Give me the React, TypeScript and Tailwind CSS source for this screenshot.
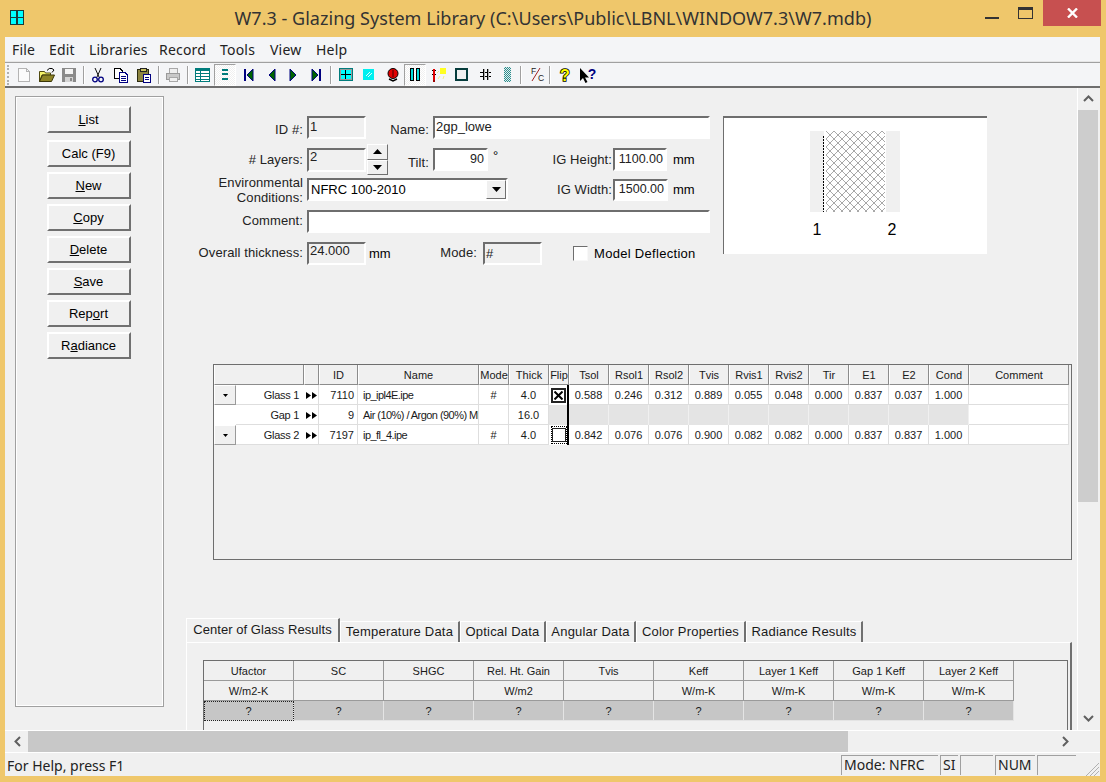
import React from "react";

const ui = "font-['Liberation_Sans',Arial,sans-serif]";
const seg = "font-['Noto_Sans',sans-serif]";

function Sv({ children, w = 16, h = 16 }: { children: React.ReactNode; w?: number; h?: number }) {
  return (
    <svg width={w} height={h} viewBox={`0 0 ${w} ${h}`} shapeRendering="crispEdges" className="block">
      {children}
    </svg>
  );
}

const Sep = ({ w }: { w: number }) => (
  <div style={{ width: w }} className="flex shrink-0 justify-center">
    <div className="h-[18px] w-[2px] border-r border-l border-r-white border-l-[#a0a0a0]" />
  </div>
);

function Tb({ w, pressed, children }: { w: number; pressed?: boolean; children: React.ReactNode }) {
  return (
    <div
      style={{ width: w }}
      className={
        "flex h-[22px] shrink-0 items-center justify-center " +
        (pressed
          ? "border border-t-[#a0a0a0] border-r-white border-b-white border-l-[#a0a0a0] bg-[repeating-conic-gradient(#ffffff_0_25%,#f0f0f0_0_50%)] bg-[length:2px_2px]"
          : "")
      }
    >
      {children}
    </div>
  );
}

const NavIcon = ({ dir, bar }: { dir: "l" | "r"; bar?: boolean }) => (
  <Sv w={12} h={14}>
    {dir === "l" ? (
      <>
        {bar && <rect x="1" y="1" width="2" height="12" fill="#000080" />}
        <polygon points="10,1 10,13 4,7" fill="#006400" stroke="#000080" shapeRendering="auto" />
      </>
    ) : (
      <>
        <polygon points="2,1 2,13 8,7" fill="#006400" stroke="#000080" shapeRendering="auto" />
        {bar && <rect x="9" y="1" width="2" height="12" fill="#000080" />}
      </>
    )}
  </Sv>
);

function Toolbar() {
  return (
    <div className="flex h-[23px] shrink-0 items-center bg-[#f4f5f7] pl-[2px]">
      <div className="mr-[4px] h-[20px] w-[2px] border-l-2 border-dotted border-[#b0b0b0]" />
      <Tb w={22}>
        <Sv>
          <path d="M2.5 1.5H10.5L13.5 4.5V14.5H2.5Z M10.5 1.5V4.5H13.5" fill="#fbfbfb" stroke="#b4b4b4" />
        </Sv>
      </Tb>
      <Tb w={23}>
        <Sv>
          <path d="M0.5 14.5V4.5H5.5L6.5 6H11.5V8H3L0.5 14.5Z" fill="#f5f26a" stroke="#504a10" shapeRendering="auto" />
          <path d="M0.5 14.5L3.5 8H15.5L12.5 14.5Z" fill="#8e8426" stroke="#3a3608" shapeRendering="auto" />
          <path d="M8 3.5Q10 0.5 13 1.5L15 3L13 5.5" fill="none" stroke="#000" shapeRendering="auto" />
        </Sv>
      </Tb>
      <Tb w={22}>
        <Sv>
          <rect x="1" y="1" width="14" height="14" fill="#8a8a8a" />
          <rect x="4" y="2" width="8" height="5" fill="#f4f4f4" />
          <rect x="4" y="10" width="8" height="5" fill="#d4d4d4" />
          <rect x="9" y="11" width="2" height="3" fill="#8a8a8a" />
        </Sv>
      </Tb>
      <Sep w={7} />
      <Tb w={22}>
        <Sv>
          <path d="M5 1L9 10M11 1L7 10" stroke="#111" fill="none" shapeRendering="auto" />
          <circle cx="5" cy="12.5" r="2.3" fill="none" stroke="#000080" strokeWidth="1.3" shapeRendering="auto" />
          <circle cx="11" cy="12.5" r="2.3" fill="none" stroke="#000080" strokeWidth="1.3" shapeRendering="auto" />
        </Sv>
      </Tb>
      <Tb w={24}>
        <Sv>
          <path d="M1.5 1.5H7L9.5 4V11.5H1.5Z" fill="#fff" stroke="#000" />
          <path d="M6.5 5.5H12L14.5 8V15H6.5Z" fill="#fff" stroke="#000080" />
          <rect x="8" y="9" width="5" height="1" fill="#000080" />
          <rect x="8" y="11" width="5" height="1" fill="#000080" />
          <rect x="8" y="13" width="5" height="1" fill="#000080" />
        </Sv>
      </Tb>
      <Tb w={22}>
        <Sv>
          <rect x="1.5" y="2.5" width="11" height="12" fill="#8c8440" stroke="#2a2a10" />
          <rect x="4" y="1" width="6" height="3" fill="#c8c060" stroke="#222" />
          <rect x="7.5" y="7.5" width="7" height="8" fill="#fff" stroke="#000080" />
          <rect x="9" y="10" width="4" height="1" fill="#000080" />
          <rect x="9" y="12" width="4" height="1" fill="#000080" />
        </Sv>
      </Tb>
      <Sep w={7} />
      <Tb w={22}>
        <Sv>
          <path d="M4 1.5H12V6H4Z" fill="#efefef" stroke="#a8a8a8" />
          <path d="M1.5 6.5H14.5V12.5H1.5Z" fill="#c8c8c8" stroke="#9a9a9a" />
          <path d="M4 10.5H12V14.5H4Z" fill="#f0f0f0" stroke="#a8a8a8" />
        </Sv>
      </Tb>
      <Sep w={7} />
      <Tb w={23}>
        <Sv w={15} h={14}>
          <rect x="0.5" y="0.5" width="14" height="13" fill="#fff" stroke="#007c7c" />
          <rect x="1" y="1" width="13" height="2" fill="#007c7c" />
          <rect x="5" y="1" width="1" height="12" fill="#007c7c" />
          <rect x="1" y="5" width="13" height="1" fill="#007c7c" />
          <rect x="1" y="8" width="13" height="1" fill="#007c7c" />
          <rect x="1" y="11" width="13" height="1" fill="#007c7c" />
        </Sv>
      </Tb>
      <Tb w={22} pressed>
        <Sv w={8} h={13}>
          <rect x="1" y="1" width="6" height="2" fill="#007c7c" />
          <rect x="1" y="5" width="6" height="2" fill="#007c7c" />
          <rect x="1" y="10" width="6" height="2" fill="#007c7c" />
        </Sv>
      </Tb>
      <Tb w={25}><NavIcon dir="l" bar /></Tb>
      <Tb w={20}><NavIcon dir="l" /></Tb>
      <Tb w={26}><NavIcon dir="r" /></Tb>
      <Tb w={18}><NavIcon dir="r" bar /></Tb>
      <Sep w={12} />
      <Tb w={18}>
        <Sv w={14} h={13}>
          <rect x="0" y="0" width="14" height="13" fill="#007c7c" />
          <rect x="1" y="1" width="12" height="11" fill="#9a9a9a" />
          <rect x="2" y="2" width="10" height="9" fill="#00ffff" />
          <rect x="6" y="2" width="1" height="9" fill="#000" />
          <rect x="2" y="6" width="10" height="1" fill="#000" />
        </Sv>
      </Tb>
      <Tb w={26}>
        <Sv w={11} h={11}>
          <rect x="0" y="0" width="11" height="11" fill="#00f0f0" />
          <path d="M3 7L7 3M5 8L9 4" stroke="#dffdfd" fill="none" shapeRendering="auto" />
        </Sv>
      </Tb>
      <Tb w={23}>
        <Sv w={12} h={14}>
          <ellipse cx="6" cy="5.5" rx="5" ry="5" fill="#e00000" stroke="#000" shapeRendering="auto" />
          <rect x="5" y="2" width="2" height="7" fill="#900000" />
          <path d="M2 11L6 13L10 11" fill="none" stroke="#000" strokeWidth="1.4" shapeRendering="auto" />
        </Sv>
      </Tb>
      <Tb w={22} pressed>
        <Sv w={10} h={13}>
          <rect x="0.5" y="0.5" width="3" height="12" fill="#00dcdc" stroke="#000" />
          <rect x="6.5" y="0.5" width="3" height="12" fill="#00dcdc" stroke="#000" />
        </Sv>
      </Tb>
      <Tb w={26}>
        <Sv w={15} h={15}>
          <rect x="8" y="1" width="6" height="6" fill="#ffff20" />
          <path d="M7 4L5 6M8 9L6 12M12 9L11 12" stroke="#f2ee90" shapeRendering="auto" fill="none" />
          <rect x="1" y="2" width="2" height="12" fill="#e00000" />
          <rect x="0" y="3" width="1" height="1" fill="#000" />
          <rect x="3" y="3" width="1" height="1" fill="#000" />
          <rect x="0" y="7" width="1" height="1" fill="#000" />
          <rect x="3" y="7" width="1" height="1" fill="#000" />
          <rect x="1" y="13" width="2" height="2" fill="#a00000" />
        </Sv>
      </Tb>
      <Tb w={18}>
        <Sv w={13} h={13}>
          <rect x="1" y="1" width="11" height="11" fill="#f0f0f0" stroke="#063c3c" strokeWidth="2" />
        </Sv>
      </Tb>
      <Tb w={30}>
        <Sv w={13} h={13}>
          <path d="M4 1V12M8 1V12M1 4H12M1 8H12" stroke="#000" fill="none" />
          <path d="M5 1V12M9 1V12" stroke="#aaaaaa" fill="none" />
        </Sv>
      </Tb>
      <Tb w={14}>
        <div className="h-[15px] w-[7px] bg-[repeating-conic-gradient(#2e8b8b_0_25%,#e0f0f0_0_50%)] bg-[length:2px_2px]" />
      </Tb>
      <Sep w={14} />
      <Tb w={18}>
        <svg width="16" height="17" viewBox="0 0 16 17" className="block">
          <text x="2" y="8" fontSize="8.5" fontFamily="Liberation Sans" fill="#222">F</text>
          <text x="9" y="15" fontSize="8.5" fontFamily="Liberation Sans" fill="#222">C</text>
          <path d="M11 2L3 15" stroke="#a02020" fill="none" />
        </svg>
      </Tb>
      <Sep w={8} />
      <Tb w={22}>
        <svg width="16" height="20" viewBox="0 0 16 20" className="block">
          <text x="8" y="16" textAnchor="middle" fontSize="16" fontWeight="700" fontFamily="Liberation Sans" fill="#ffff00" stroke="#000" strokeWidth="1.6" paintOrder="stroke">?</text>
        </svg>
      </Tb>
      <Tb w={24}>
        <svg width="20" height="20" viewBox="0 0 20 20" className="block">
          <path d="M2 3V16L5 13L7.5 18L9.5 17L7 12.5H11Z" fill="#000" />
          <text x="14" y="14" textAnchor="middle" fontSize="14" fontWeight="700" fontFamily="Liberation Sans" fill="#000080">?</text>
        </svg>
      </Tb>
    </div>
  );
}

function Btn({ pre = "", u, post }: { pre?: string; u?: string; post?: string }) {
  return (
    <div className="flex h-[27px] w-[84px] items-center justify-center border-2 border-t-white border-r-[#707070] border-b-[#707070] border-l-white text-[13px] text-black">
      <span>
        {pre}
        {u && <span className="underline underline-offset-1">{u}</span>}
        {post}
      </span>
    </div>
  );
}

const sunken = "border-2 border-t-[#6e6e6e] border-r-white border-b-white border-l-[#6e6e6e]";

function Field({ w, h = 23, white, right, text, pad = "pb-[2px]" }: { w: number; h?: number; white?: boolean; right?: boolean; text?: string; pad?: string }) {
  return (
    <div
      style={{ width: w, height: h }}
      className={sunken + " flex shrink-0 items-center overflow-hidden px-[1px] leading-none text-[#222] " + pad + " " + (white ? "bg-white " : "bg-[#f0f0f0] ") + (right ? "justify-end pr-[2px] text-[12.5px]" : "text-[13px]")}
    >
      {text}
    </div>
  );
}

function Label({ w, children, cls = "mr-[4px]" }: { w: number; children: React.ReactNode; cls?: string }) {
  return (
    <div style={{ width: w }} className={"shrink-0 text-right text-[13px] leading-[15px] tracking-[0.1px] whitespace-nowrap text-[#222] " + cls}>
      {children}
    </div>
  );
}

const Tri = ({ up }: { up?: boolean }) => (
  <svg width="9" height="5" viewBox="0 0 9 5" className="block">
    <polygon points={up ? "0,5 9,5 4.5,0" : "0,0 9,0 4.5,5"} fill="#000" />
  </svg>
);

function Spinner() {
  return (
    <div className="ml-[1px] flex h-[31px] w-[21px] shrink-0 flex-col">
      {[true, false].map((u) => (
        <div key={String(u)} className="flex h-[15.5px] items-center justify-center border border-t-white border-r-[#707070] border-b-[#707070] border-l-white">
          <Tri up={u} />
        </div>
      ))}
    </div>
  );
}

function Preview() {
  const dots: React.ReactNode[] = [];
  for (let i = 0; i < 8; i++) {
    dots.push(<rect key={"a" + i} x={i} y={i} width="1" height="1" fill="#a8a8a8" />);
    dots.push(<rect key={"b" + i} x={7 - i} y={i} width="1" height="1" fill="#a8a8a8" />);
  }
  return (
    <div className="flex h-[138px] w-[264px] flex-col items-center border-t-2 border-l border-t-[#6e6e6e] border-l-[#6e6e6e] bg-white pt-[13px] pr-[2px]">
      <svg width="90" height="81" viewBox="0 0 90 81" shapeRendering="crispEdges" className="block">
        <defs>
          <pattern id="hx" width="8" height="8" patternUnits="userSpaceOnUse">{dots}</pattern>
        </defs>
        <rect x="0" y="0" width="14" height="81" fill="#f0f0f0" />
        <rect x="76" y="0" width="14" height="81" fill="#f0f0f0" />
        <rect x="16" y="0" width="59" height="81" fill="url(#hx)" />
        <line x1="13.5" y1="5" x2="13.5" y2="81" stroke="#000" strokeDasharray="2 1" />
      </svg>
      <div className="mt-[9px] flex w-[90px] justify-between px-[3px] text-[16px] leading-[18px] text-black">
        <span>1</span>
        <span>2</span>
      </div>
    </div>
  );
}

function Form() {
  return (
    <div className="flex h-[276px] pt-[28px] pl-[26px]">
      <div className="w-[533px]">
        <div className="flex h-[23px] items-center">
          <Label w={113} cls="mr-[4px] pt-[4px]">ID #:</Label>
          <Field w={59} text="1" />
          <Label w={63} cls="mr-[4px] pt-[4px]">Name:</Label>
          <Field w={277} white text="2gp_lowe" />
        </div>
        <div className="mt-[5px] flex h-[31px] items-center">
          <Label w={113}># Layers:</Label>
          <Field w={59} h={24} text="2" pad="pb-[6px]" />
          <Spinner />
          <Label w={41} cls="mr-[4px] pt-[6px]">Tilt:</Label>
          <Field w={55} white right text="90" pad="pb-0" />
          <div className="mb-[8px] ml-[5px] w-[16px] text-[13px] leading-none">°</div>
          <Label w={103} cls="mr-[1px]">IG Height:</Label>
          <Field w={54} white right text="1100.00" pad="pb-0" />
          <div className="ml-[6px] text-[13px]">mm</div>
        </div>
        <div className="mt-[3px] flex h-[23px] items-center">
          <Label w={113}>Environmental<br />Conditions:</Label>
          <div className={sunken + " flex h-[23px] w-[201px] shrink-0 items-center justify-between bg-white pl-[2px] text-[13px]"}>
            <span>NFRC 100-2010</span>
            <div className="flex h-[19px] w-[20px] items-center justify-center border border-t-white border-r-[#707070] border-b-[#707070] border-l-white bg-[#f0f0f0]">
              <Tri />
            </div>
          </div>
          <Label w={104} cls="mr-[1px]">IG Width:</Label>
          <Field w={55} h={22} white right text="1500.00" pad="pb-0" />
          <div className="ml-[5px] text-[13px]">mm</div>
        </div>
        <div className="mt-[9px] flex h-[23px] items-center">
          <Label w={113} cls="mr-[4px] pb-[2px]">Comment:</Label>
          <Field w={403} white />
        </div>
        <div className="mt-[9px] flex h-[23px] items-center">
          <Label w={113} cls="mr-[4px] pb-[2px]">Overall thickness:</Label>
          <Field w={59} text="24.000" pad="pb-[6px]" />
          <div className="ml-[3px] w-[70px] text-[13px]">mm</div>
          <Label w={38} cls="mr-[4px] pb-[2px]">Mode:</Label>
          <div className="ml-[2px]"><Field w={59} text="#" pad="pb-0" /></div>
          <div className="ml-[31px] h-[15px] w-[15px] border border-t-[#6e6e6e] border-r-[#f8f8f8] border-b-[#f8f8f8] border-l-[#6e6e6e] bg-white" />
          <div className="ml-[6px] text-[13px] tracking-[0.3px] whitespace-nowrap">Model Deflection</div>
        </div>
      </div>
      <div>
        <Preview />
      </div>
    </div>
  );
}

const cols = "grid grid-cols-[22px_68px_15px_39px_121px_30px_40px_20px_repeat(10,40px)_100px]";
const heads = ["ID", "Name", "Mode", "Thick", "Flip", "Tsol", "Rsol1", "Rsol2", "Tvis", "Rvis1", "Rvis2", "Tir", "E1", "E2", "Cond", "Comment"];

const hCell = "flex h-[20px] items-center justify-center border-r border-b border-l border-r-[#8c8c8c] border-b-[#8c8c8c] border-l-white pt-[2px]";
const bCell = "flex h-[20px] items-center overflow-hidden whitespace-nowrap border-r border-b border-[#dedede] bg-white pt-[2px]";

const Arrows = () => (
  <svg width="11" height="7" viewBox="0 0 11 7" className="block">
    <polygon points="0,0 5,3.5 0,7" fill="#000" />
    <polygon points="6,0 11,3.5 6,7" fill="#000" />
  </svg>
);

const DropBtn = () => (
  <div className="flex h-[20px] items-center justify-center border border-t-white border-r-[#9a9a9a] border-b-[#9a9a9a] border-l-white bg-[#f0f0f0]">
    <svg width="5" height="3" viewBox="0 0 5 3" className="block"><polygon points="0,0 5,0 2.5,3" fill="#000" /></svg>
  </div>
);

function Row({ kind, label, id, name, mode, thick, flip, vals }: { kind: "glass" | "gap"; label: string; id: string; name: string; mode: string; thick: string; flip?: "x" | "o"; vals: string[] }) {
  const g = kind === "gap";
  return (
    <div className={cols}>
      {g ? <div className="h-[20px] bg-white" /> : <DropBtn />}
      <div className={bCell + " justify-end border-r-0 pr-[5px] tracking-[-0.3px]"}>{label}</div>
      <div className={bCell + " justify-center"}><Arrows /></div>
      <div className={bCell + " justify-end pr-[3px]"}>{id}</div>
      <div className={bCell + " pl-[5px] tracking-[-0.55px]"}>{name}</div>
      <div className={bCell + " justify-center"}>{mode}</div>
      <div className={bCell + " justify-center"}>{thick}</div>
      <div className={(g ? "bg-[#e4e4e4]" : "bg-white") + " flex h-[20px] items-center border-r-2 border-r-black pl-[2px]"}>
        {flip === "x" && (
          <div className="flex h-[15px] w-[15px] items-center justify-center border-2 border-[#222] bg-white">
            <svg width="9" height="9" viewBox="0 0 9 9" className="block"><path d="M0.5 0.5L8.5 8.5M8.5 0.5L0.5 8.5" stroke="#000" strokeWidth="2" /></svg>
          </div>
        )}
        {flip === "o" && (
          <div className="flex h-[18px] w-[17px] items-center justify-center border border-dotted border-black">
            <div className="h-[14px] w-[14px] border border-[#222] bg-white" />
          </div>
        )}
      </div>
      {vals.map((v, i) => (
        <div key={i} className={g ? "h-[20px] border-r border-[#f0f0f0] bg-[#e4e4e4]" : bCell + " justify-center"}>{v}</div>
      ))}
      <div className={bCell} />
    </div>
  );
}

function GlassTable() {
  const none = Array(10).fill("");
  return (
    <div className={ui + " ml-[49px] h-[196px] w-[859px] border border-[#6e6e6e] bg-[#f0f0f0] text-[11px] leading-none text-[#1a1a1a]"}>
      <div className={cols}>
        <div className={hCell + " col-span-2"} />
        <div className={hCell} />
        {heads.map((h) => (
          <div key={h} className={hCell}>{h}</div>
        ))}
      </div>
      <Row kind="glass" label="Glass 1" id="7110" name="ip_ipl4E.ipe" mode="#" thick="4.0" flip="x" vals={["0.588", "0.246", "0.312", "0.889", "0.055", "0.048", "0.000", "0.837", "0.037", "1.000"]} />
      <Row kind="gap" label="Gap 1" id="9" name="Air (10%) / Argon (90%) Mix" mode="" thick="16.0" vals={none} />
      <Row kind="glass" label="Glass 2" id="7197" name="ip_fl_4.ipe" mode="#" thick="4.0" flip="o" vals={["0.842", "0.076", "0.076", "0.900", "0.082", "0.082", "0.000", "0.837", "0.837", "1.000"]} />
    </div>
  );
}

function Tabs() {
  const tabs: [string, number][] = [
    ["Temperature Data", 120],
    ["Optical Data", 86],
    ["Angular Data", 90],
    ["Color Properties", 110],
    ["Radiance Results", 117],
  ];
  return (
    <div className="ml-[22px] flex h-[24px] items-end text-[13px] leading-none tracking-[0.2px] text-[#1a1a1a]">
      <div className="z-10 flex h-[24px] w-[154px] items-start justify-center border-t border-r-2 border-l border-t-white border-r-[#707070] border-l-white bg-[#f0f0f0] pt-[4px] tracking-[0.05px] whitespace-nowrap">
        Center of Glass Results
      </div>
      {tabs.map(([t, w]) => (
        <div key={t} style={{ width: w }} className="flex h-[21px] items-center justify-center border-t border-r-2 border-l border-t-white border-r-[#707070] border-l-white pb-[1px] whitespace-nowrap">
          {t}
        </div>
      ))}
    </div>
  );
}

function Results() {
  const h = ["Ufactor", "SC", "SHGC", "Rel. Ht. Gain", "Tvis", "Keff", "Layer 1 Keff", "Gap 1 Keff", "Layer 2 Keff"];
  const u = ["W/m2-K", "", "", "W/m2", "", "W/m-K", "W/m-K", "W/m-K", "W/m-K"];
  const c = "flex h-[20px] items-center justify-center border-r border-b border-r-[#9a9a9a] border-b-[#9a9a9a] pt-[2px]";
  return (
    <div className="ml-[22px] h-[100px] w-[886px] border-t border-r-2 border-l border-t-white border-r-[#707070] border-l-white pt-[17px] pl-[16px]">
      <div className={ui + " h-[90px] w-[865px] border-t border-r border-l border-[#6e6e6e] text-[11px] leading-none text-[#1a1a1a]"}>
        <div className="grid w-[810px] grid-cols-[repeat(9,90px)]">
          {h.map((t) => <div key={t} className={c}>{t}</div>)}
          {u.map((t, i) => <div key={i} className={c}>{t}</div>)}
          {h.map((t, i) => (
            <div key={t} className={"flex h-[20px] items-center justify-center border-r border-b border-[#e4e4e4] bg-[#c6c6c6] pt-[2px] " + (i === 0 ? "outline-1 -outline-offset-1 outline-[#222] outline-dotted" : "")}>?</div>
          ))}
        </div>
      </div>
    </div>
  );
}

const Chev = ({ d }: { d: "u" | "d" | "l" | "r" }) => {
  const p = { u: "M1 7L5.5 2.5L10 7", d: "M1 2L5.5 6.5L10 2", l: "M7 1L2.5 5.5L7 10", r: "M2 1L6.5 5.5L2 10" }[d];
  return (
    <svg width="11" height="11" viewBox="0 0 11 11" className="block">
      <path d={p} fill="none" stroke="#606060" strokeWidth="2" />
    </svg>
  );
};

export default function App() {
  return (
    <div className={ui + " flex h-[782px] w-[1106px] flex-col overflow-hidden bg-[#efc76b] text-black"}>
      <div className="grid h-[37px] shrink-0 grid-cols-[1fr_auto_1fr] items-start">
        <div className="pt-[10px] pl-[10px]">
          <Sv w={14} h={15}>
            <rect x="0" y="0" width="14" height="15" fill="#1a3a3a" />
            <rect x="1" y="1" width="12" height="13" fill="#00ffff" />
            <rect x="6" y="1" width="2" height="13" fill="#1a3a3a" />
            <rect x="1" y="7" width="12" height="1" fill="#1a3a3a" />
          </Sv>
        </div>
        <div className={seg + " pt-[5px] text-[18px] leading-[26px] tracking-[0.03px] whitespace-nowrap text-[#333]"}>
          W7.3 - Glazing System Library (C:\Users\Public\LBNL\WINDOW7.3\W7.mdb)
        </div>
        <div className="flex justify-end pr-[5px]">
          <div className="mr-[19px] flex h-[26px] w-[14px] items-start pt-[17px]">
            <div className="h-[2px] w-[14px] bg-[#333]" />
          </div>
          <div className="mr-[10px] flex h-[26px] w-[15px] items-start pt-[7px]">
            <div className="h-[12px] w-[15px] border border-t-[3px] border-[#333]" />
          </div>
          <div className="flex h-[26px] w-[58px] items-center justify-center bg-[#c75050]">
            <svg width="11" height="10" viewBox="0 0 11 10" className="block">
              <path d="M1 0.5L10 9.5M10 0.5L1 9.5" stroke="#fff" strokeWidth="2.4" />
            </svg>
          </div>
        </div>
      </div>

      <div className="mr-[6px] mb-[6px] ml-[5px] flex min-h-0 flex-1 flex-col bg-[#f0f0f0]">
        <div className={seg + " flex h-[26px] shrink-0 items-center border-b border-b-[#a0a0a0] bg-[#f4f5f7] pl-[7px] text-[14px] leading-none tracking-[0.2px] text-[#222] shadow-[inset_0_-1px_0_#e6e6e6]"}>
          <span className="w-[37px]">File</span>
          <span className="w-[40px]">Edit</span>
          <span className="w-[70px]">Libraries</span>
          <span className="w-[61px]">Record</span>
          <span className="w-[50px]">Tools</span>
          <span className="w-[46px]">View</span>
          <span>Help</span>
        </div>
        <Toolbar />
        <div className="h-[2px] shrink-0 bg-[#6e6e6e]" />

        <div className="flex min-h-0 flex-1">
          <div className="flex min-h-0 min-w-0 flex-1 overflow-hidden">
            <div className="w-[159px] shrink-0 pt-[8px] pl-[10px]">
              <div className="flex h-[611px] w-[149px] flex-col items-center border border-[#a0a0a0] pt-[9px] pr-[2px] outline-1 -outline-offset-2 outline-white">
                <Btn u="L" post="ist" />
                <div className="mt-[7px]"><Btn pre="Calc (F9)" /></div>
                <div className="mt-[5px] flex flex-col gap-[5px]">
                  <Btn u="N" post="ew" />
                  <Btn u="C" post="opy" />
                  <Btn u="D" post="elete" />
                  <Btn u="S" post="ave" />
                  <Btn pre="Rep" u="o" post="rt" />
                  <Btn pre="R" u="a" post="diance" />
                </div>
              </div>
            </div>
            <div className="w-[913px] shrink-0">
              <Form />
              <GlassTable />
              <div className="mt-[58px]">
                <Tabs />
                <Results />
              </div>
            </div>
          </div>
          <div className="flex w-[23px] shrink-0 flex-col items-center border-l border-l-white pr-[2px]">
            <div className="flex h-[22px] items-center justify-center"><Chev d="u" /></div>
            <div className="h-[392px] w-full bg-[#cdcdcd]" />
            <div className="flex-1" />
            <div className="flex h-[22px] items-center justify-center"><Chev d="d" /></div>
          </div>
        </div>

        <div className="flex h-[23px] shrink-0 items-center border-t border-b border-t-white border-b-white">
          <div className="flex h-[21px] w-[23px] items-center justify-center pl-[3px]"><Chev d="l" /></div>
          <div className="h-[21px] w-[820px] bg-[#c8c8c8]" />
          <div className="flex-1" />
          <div className="flex h-[21px] w-[22px] items-center justify-center"><Chev d="r" /></div>
          <div className="w-[23px]" />
        </div>

        <div className={seg + " flex h-[23px] shrink-0 items-center pl-[2px] text-[14px] leading-none text-[#222]"}>
          <span className="flex-1 pt-[2px]">For Help, press F1</span>
          {[["Mode: NFRC", 97], ["SI", 18], ["", 33], ["NUM", 40], ["", 39]].map(([t, w], i) => (
            <div key={i} style={{ width: w as number }} className="mr-[2px] flex h-[20px] items-center border-t border-l border-t-[#a0a0a0] border-l-[#a0a0a0] pl-[2px] whitespace-nowrap">
              {t}
            </div>
          ))}
          <div className="w-[22px] self-end">
            <svg width="22" height="16" viewBox="0 0 22 16" className="block">
              <path d="M21 3L8 16M21 7L12 16M21 11L16 16" stroke="#b0b0b0" fill="none" />
            </svg>
          </div>
        </div>
      </div>
    </div>
  );
}
